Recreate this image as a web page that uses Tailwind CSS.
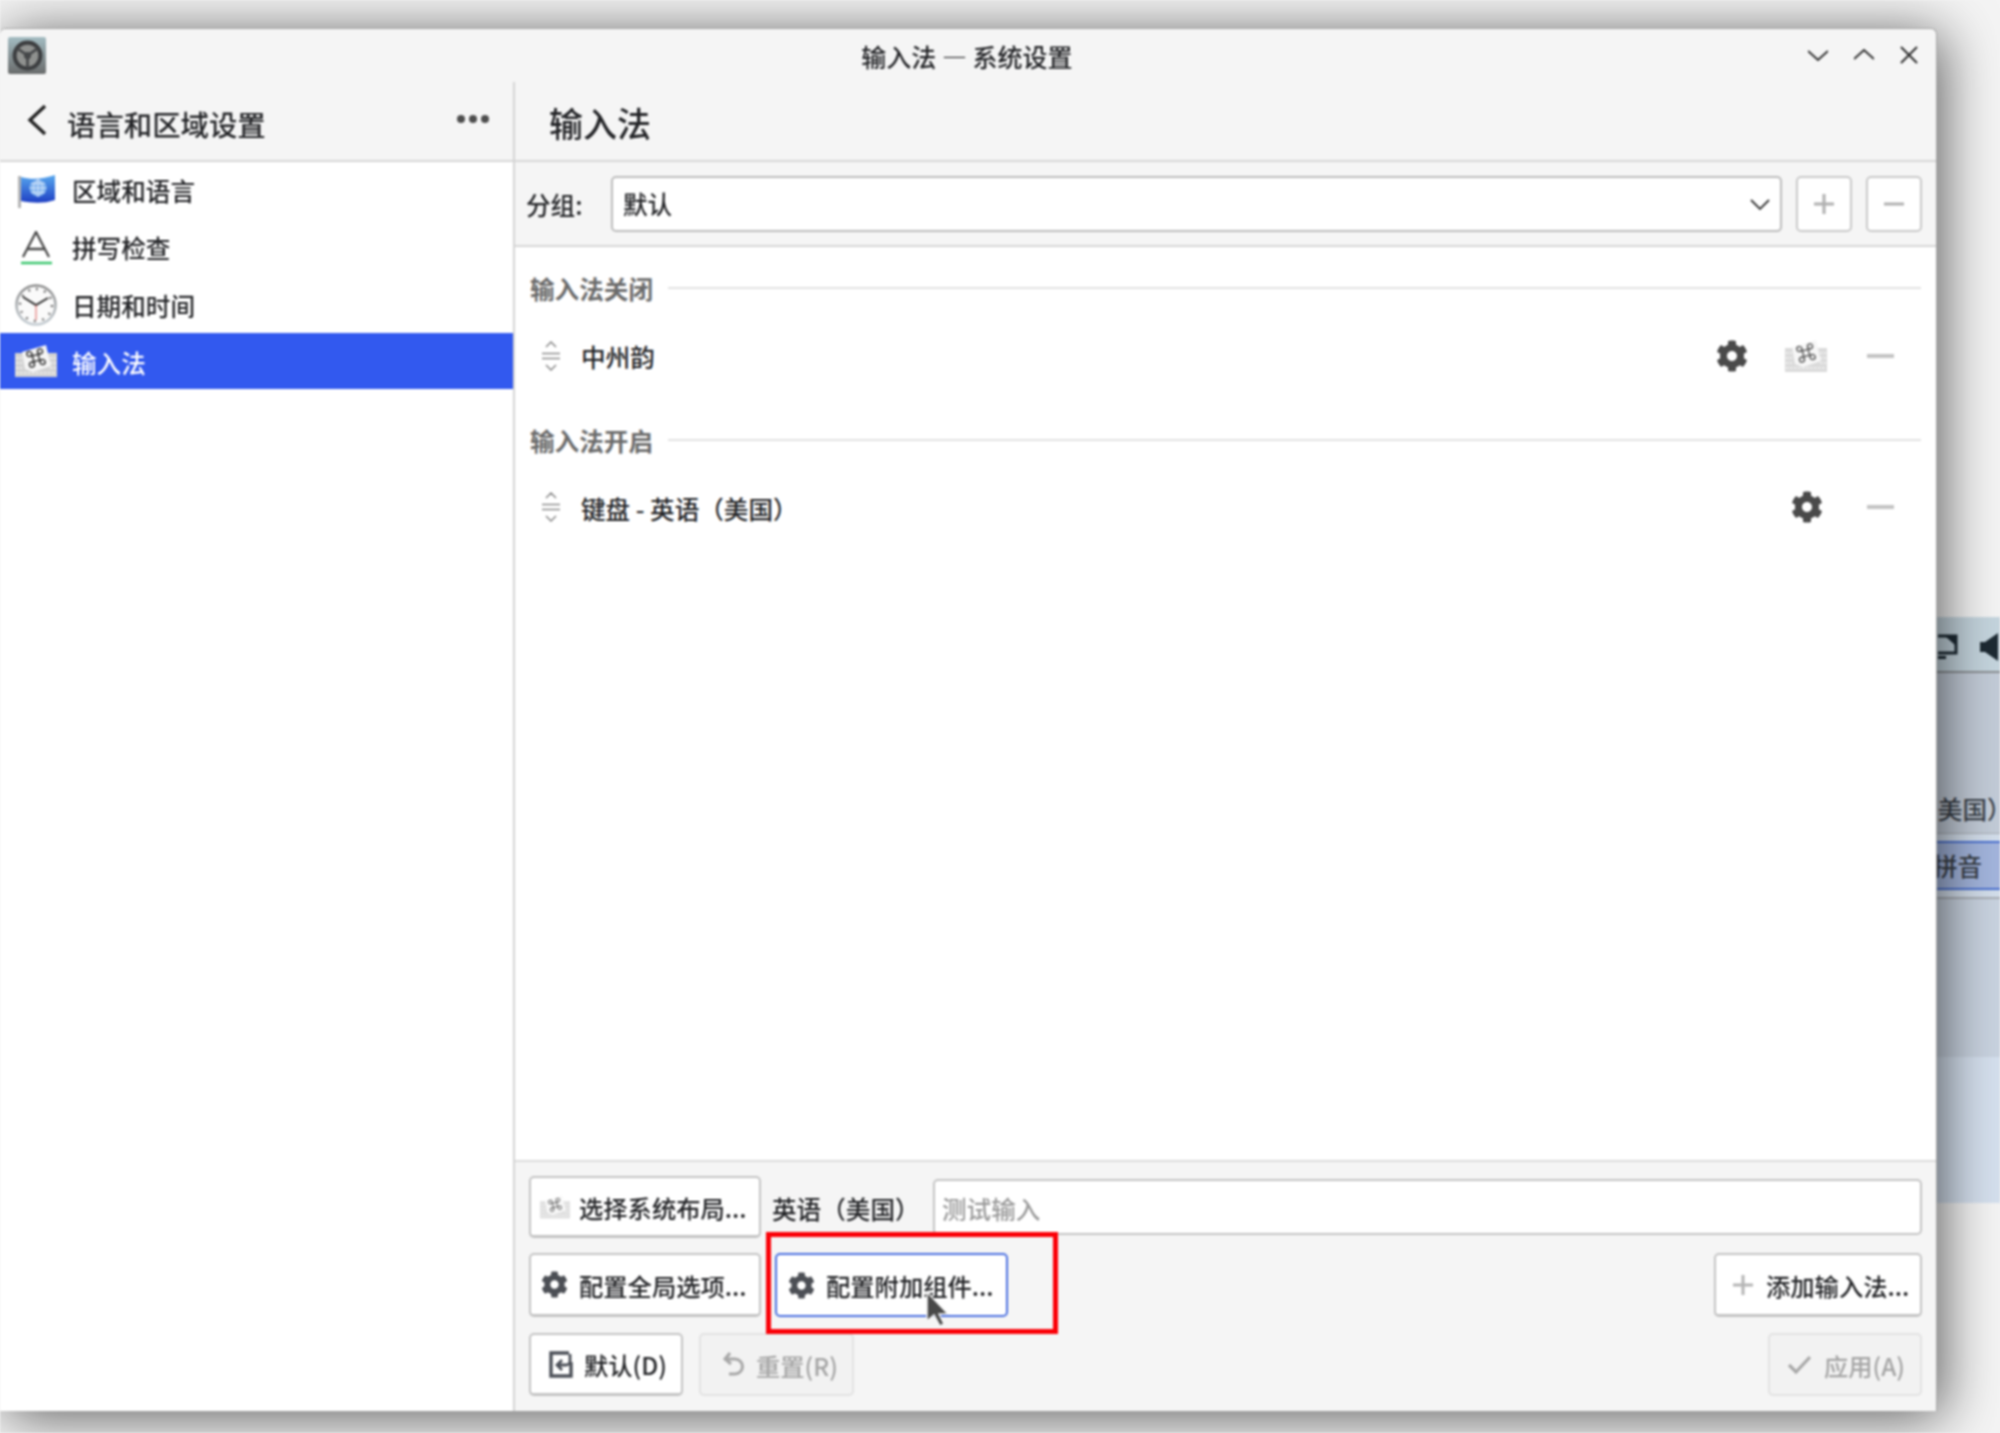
<!DOCTYPE html>
<html lang="zh-CN">
<head>
  <meta charset="UTF-8" />
  <title>输入法 — 系统设置</title>
  <script src="https://cdn.jsdelivr.net/npm/@tailwindcss/browser@4"></script>
</head>
<body class="w-[2000px] h-[1433px] overflow-hidden relative bg-[#f4f4f4] text-[#232427] font-['Noto_Sans_CJK_SC','Noto_Sans',sans-serif] font-medium text-[24.6px] leading-none blur-[0.8px]">
  <svg class="hidden">
    <symbol id="gear" viewBox="0 0 512 512">
      <path fill="currentColor" d="M487.4 315.7l-42.6-24.6c4.3-23.2 4.3-47 0-70.2l42.6-24.6c4.9-2.8 7.1-8.6 5.5-14-11.1-35.6-30-67.8-54.7-94.6-3.8-4.1-10-5.1-14.8-2.3L380.8 110c-17.9-15.4-38.5-27.3-60.8-35.1V25.8c0-5.6-3.9-10.5-9.4-11.7-36.7-8.2-74.3-7.8-109.2 0-5.5 1.2-9.4 6.1-9.4 11.7V75c-22.2 7.9-42.8 19.8-60.8 35.1L88.7 85.5c-4.9-2.8-11-1.9-14.8 2.3-24.7 26.7-43.6 58.9-54.7 94.6-1.7 5.4.6 11.2 5.5 14L67.3 221c-4.3 23.2-4.3 47 0 70.2l-42.6 24.6c-4.9 2.8-7.1 8.6-5.5 14 11.1 35.6 30 67.8 54.7 94.6 3.8 4.1 10 5.1 14.8 2.3l42.6-24.6c17.9 15.4 38.5 27.3 60.8 35.1v49.2c0 5.6 3.9 10.5 9.4 11.7 36.7 8.2 74.3 7.8 109.2 0 5.5-1.2 9.4-6.1 9.4-11.7v-49.2c22.2-7.9 42.8-19.8 60.8-35.1l42.6 24.6c4.9 2.8 11 1.9 14.8-2.3 24.7-26.7 43.6-58.9 54.7-94.6 1.5-5.5-.7-11.3-5.6-14.1zM256 336c-44.1 0-80-35.9-80-80s35.9-80 80-80 80 35.9 80 80-35.9 80-80 80z"/>
    </symbol>
    <symbol id="kbd" viewBox="0 0 42 32">
      <path fill="#d2d2d2" d="M0 8h42v24H0z"/>
      <path fill="none" stroke="#f4f4f4" stroke-width="1.300" stroke-dasharray="2.500 1.500" d="M1 13h6M1 18h6M1 23h6M35 13h6M35 18h6M35 23h6M1 28h40"/>
      <path fill="#f6f6f6" d="M7 7 31 0l5 21-18 6-8-3z"/>
      <g fill="none" stroke="#454545" stroke-width="1.600" transform="rotate(-14 21 13)">
        <circle cx="15.500" cy="7.500" r="2.500"/><circle cx="26.500" cy="7.500" r="2.500"/><circle cx="15.500" cy="18.500" r="2.500"/><circle cx="26.500" cy="18.500" r="2.500"/>
        <path d="M18 7.500V18.500M24 7.500V18.500M15.500 10H26.500M15.500 16H26.500"/>
      </g>
    </symbol>
    <symbol id="handle" viewBox="0 0 20 30">
      <path fill="none" stroke="#8a8a8a" stroke-width="1.500" d="M5 6l5-5 5 5M1 12.500h18M1 17.500h18M5 24l5 5 5-5"/>
    </symbol>
  </svg>

  <!-- window behind -->
  <div class="absolute left-[1850px] top-[617px] w-[150px] h-[586px] flex flex-col overflow-hidden bg-[#d3deeb] text-[#3a4048]">
    <div class="h-[56px] shrink-0 bg-[#c5d5de] border-b-2 border-[#8b8f93] flex items-center pt-[5px] pl-[88px] gap-[22px]">
      <svg class="w-[20px] h-[26px]" viewBox="0 0 20 26"><path fill="none" stroke="#1d2a33" stroke-width="3" d="M0 2h18v17H0"/><path fill="#1d2a33" d="M8 3h9v8zM0 22h8v3H0z"/></svg>
      <svg class="w-[18px] h-[28px]" viewBox="0 0 18 28"><path fill="#1d2a33" d="M0 9h5L18 0v28L5 19H0z"/></svg>
    </div>
    <div class="h-[161px] shrink-0 bg-[#c3ccd8] border-b border-[#a9aeb5] flex items-end pb-[12px] pl-[14px] whitespace-nowrap">
      <span>英语（美国）</span>
    </div>
    <div class="h-[49px] shrink-0 mt-[7px] bg-[#a3b5dd] border-y-2 border-[#4a70d0] flex items-center pl-[83px] whitespace-nowrap">
      <span>拼音</span>
    </div>
    <div class="flex-1 min-h-0 mt-[7px] border-t-2 border-[#a9aeb5] flex flex-col">
      <div class="h-[158px] shrink-0 bg-[#c9d3e0]"></div>
      <div class="flex-1 bg-[#d5e0ee]"></div>
    </div>
  </div>

  <!-- main window -->
  <div class="absolute left-0 top-[28px] w-[1937px] h-[1383px] flex flex-col bg-[#f5f5f5] rounded-t-[6px] border-t border-r border-[#a5a5a5] shadow-[6px_6px_55px_rgba(0,0,0,0.62)]">
    <div class="h-[53px] shrink-0 relative flex items-center justify-center text-[25px]">
      <div class="absolute left-[8px] top-[8px] w-[38px] h-[37px] rounded-[2px] bg-gradient-to-b from-[#a3bcc2] to-[#6a6c6c] flex items-center justify-center">
        <svg class="w-[33px] h-[33px]" viewBox="0 0 32 32"><circle cx="16" cy="16" r="14.500" fill="#3c3e40"/><circle cx="16" cy="16" r="10.500" fill="#8f918f"/><circle cx="16" cy="16" r="3.500" fill="#454749"/><path stroke="#454749" stroke-width="2.600" d="M16 16v12M16 16 6 9M16 16 26 9"/></svg>
      </div>
      <span class="mr-[2px] mt-[2px]">输入法 — 系统设置</span>
      <div class="absolute right-[18px] top-[16px] flex items-center gap-[26px]">
        <svg class="w-[20px] h-[20px]" viewBox="0 0 20 20"><path fill="none" stroke="#2c2c2c" stroke-width="2" d="M0 6l10 9 10-9"/></svg>
        <svg class="w-[20px] h-[20px]" viewBox="0 0 20 20"><path fill="none" stroke="#2c2c2c" stroke-width="2" d="M0 14l10-9 10 9"/></svg>
        <svg class="w-[18px] h-[18px]" viewBox="0 0 18 18"><path fill="none" stroke="#2c2c2c" stroke-width="2" d="M1 1l16 16M17 1 1 17"/></svg>
      </div>
    </div>

    <div class="flex-1 min-h-0 flex">
      <!-- sidebar -->
      <aside class="w-[515px] shrink-0 flex flex-col border-r-2 border-[#d4d4d4]">
        <div class="h-[80px] shrink-0 border-b-2 border-[#d6d6d6] flex items-center pl-[27px] pr-[24px]">
          <svg class="w-[20px] h-[32px] mb-[3px]" viewBox="0 0 20 32"><path fill="none" stroke="#222" stroke-width="3.400" d="M18 2 3 16l15 14"/></svg>
          <span class="ml-[20px] text-[28.400px] mt-[6px]">语言和区域设置</span>
          <div class="ml-auto flex gap-[4px] mb-[4px]">
            <span class="w-[8px] h-[8px] rounded-full bg-[#4d4d4d]"></span>
            <span class="w-[8px] h-[8px] rounded-full bg-[#4d4d4d]"></span>
            <span class="w-[8px] h-[8px] rounded-full bg-[#4d4d4d]"></span>
          </div>
        </div>
        <nav class="flex-1 bg-white">
          <div class="h-[57px] flex items-center pl-[15px]">
            <svg class="w-[42px] h-[34px]" viewBox="0 0 42 34">
              <defs><linearGradient id="flag" x1="0" y1="0" x2="0" y2="1"><stop offset="0" stop-color="#58a8ee"/><stop offset="1" stop-color="#1e3fc4"/></linearGradient></defs>
              <path fill="#b4b4b4" d="M3 2h3v32H3z"/><path fill="url(#flag)" d="M6 3c11 3 22 2 34-2v25c-12 4-23 3-34 1z"/>
              <circle cx="23" cy="14" r="8.500" fill="#7fb2ee"/><path fill="none" stroke="#d6e6fa" stroke-width="1" d="M14.500 14h17M23 5.500v17M16 9.500h14M16 18.500h14M23 5.500c-6 5-6 12 0 17M23 5.500c6 5 6 12 0 17"/>
            </svg>
            <span class="ml-[15px]">区域和语言</span>
          </div>
          <div class="h-[57px] flex items-center pl-[15px]">
            <svg class="w-[42px] h-[34px]" viewBox="0 0 42 34"><path fill="none" stroke="#4a4a4a" stroke-width="2.300" d="M8 26 21 1l13 25M13 18h16"/><path stroke="#35c46a" stroke-width="2.400" d="M6 32h31"/></svg>
            <span class="ml-[15px]">拼写检查</span>
          </div>
          <div class="h-[57px] flex items-center pl-[15px]">
            <svg class="w-[42px] h-[42px]" viewBox="0 0 42 42"><defs><linearGradient id="rim" x1="0" y1="0" x2="0" y2="1"><stop offset="0" stop-color="#8c8c8c"/><stop offset="1" stop-color="#c4ccd2"/></linearGradient></defs><circle cx="21" cy="21" r="19.500" fill="#fafafa" stroke="url(#rim)" stroke-width="2.500"/><path stroke="#666" stroke-width="2.400" stroke-dasharray="1.800 6.580" fill="none" d="M21 5a16 16 0 1 1-.01 0"/><path stroke="#2d2d2d" stroke-width="2" fill="none" d="M8 13l13 8 12-7"/><path stroke="#e0605f" stroke-width="1" d="M21 21v15"/></svg>
            <span class="ml-[15px] mt-[2px]">日期和时间</span>
          </div>
          <div class="h-[56px] flex items-center pl-[15px] bg-[#3259ef] text-white">
            <svg class="w-[42px] h-[32px]"><use href="#kbd"/></svg>
            <span class="ml-[15px] mt-[2px]">输入法</span>
          </div>
        </nav>
      </aside>

      <!-- right pane -->
      <section class="flex-1 min-w-0 flex flex-col">
        <div class="h-[80px] shrink-0 border-b-2 border-[#d6d6d6] flex items-center pl-[34px] pt-[4px] text-[34px]">输入法</div>
        <div class="h-[85px] shrink-0 border-b-2 border-[#d6d6d6] flex items-center pl-[11px] pr-[14px]">
          <span class="w-[85px] shrink-0 whitespace-nowrap mt-[2px]">分组:</span>
          <div class="flex-1 h-[56px] rounded-[5px] bg-white border-2 border-[#bcbcbc] flex items-center pl-[10px] pr-[10px]">
            默认
            <svg class="ml-auto w-[20px] h-[20px]" viewBox="0 0 20 20"><path fill="none" stroke="#333" stroke-width="1.800" d="M1 6l9 9 9-9"/></svg>
          </div>
          <div class="ml-[14px] w-[56px] h-[56px] rounded-[5px] bg-white border-2 border-[#c9c9c9] flex items-center justify-center">
            <svg class="w-[20px] h-[20px]" viewBox="0 0 20 20"><path stroke="#b0b0b0" stroke-width="3" d="M10 0v20M0 10h20"/></svg>
          </div>
          <div class="ml-[14px] w-[56px] h-[56px] rounded-[5px] bg-white border-2 border-[#c9c9c9] flex items-center justify-center">
            <svg class="w-[20px] h-[20px]" viewBox="0 0 20 20"><path stroke="#b0b0b0" stroke-width="3" d="M0 10h20"/></svg>
          </div>
        </div>

        <div class="flex-1 min-h-0 bg-white pl-[15px] pr-[15px] pt-[19px]">
          <div class="h-[44px] flex items-center font-bold text-[#6b6b6b] whitespace-nowrap">
            <span class="w-[138px] shrink-0">输入法关闭</span><span class="flex-1 h-[2px] bg-[#e2e2e2]"></span>
          </div>
          <div class="mt-[24px] h-[44px] flex items-center pl-[11px] pr-[27px]">
            <svg class="w-[20px] h-[30px]"><use href="#handle"/></svg>
            <span class="ml-[20px] mt-[1px]">中州韵</span>
            <svg class="ml-auto w-[32px] h-[32px] text-[#4a4a4a]"><use href="#gear"/></svg>
            <svg class="ml-[37px] w-[42px] h-[32px] opacity-80"><use href="#kbd"/></svg>
            <span class="ml-[40px] w-[27px] h-[4px] bg-[#c4c4c4]"></span>
          </div>
          <div class="mt-[40px] h-[44px] flex items-center font-bold text-[#6b6b6b] whitespace-nowrap">
            <span class="w-[138px] shrink-0">输入法开启</span><span class="flex-1 h-[2px] bg-[#e2e2e2]"></span>
          </div>
          <div class="mt-[23px] h-[44px] flex items-center pl-[11px] pr-[27px]">
            <svg class="w-[20px] h-[30px]"><use href="#handle"/></svg>
            <span class="ml-[20px] mt-[2px]">键盘 - 英语（美国）</span>
            <svg class="ml-auto w-[32px] h-[32px] text-[#4a4a4a]"><use href="#gear"/></svg>
            <span class="ml-[44px] w-[27px] h-[4px] bg-[#c4c4c4]"></span>
          </div>
        </div>

        <div class="h-[251px] shrink-0 border-t-2 border-[#dcdcdc] pl-[14px] pr-[14px] pt-[14px] flex flex-col">
          <div class="h-[62px] flex items-center">
            <div class="w-[232px] h-[62px] shrink-0 rounded-[5px] bg-white border-2 border-[#c4c4c4] border-b-[3px] flex items-center pl-[9px] whitespace-nowrap text-[24.300px]">
              <svg class="w-[30px] h-[24px] opacity-70"><use href="#kbd"/></svg>
              <span class="ml-[9px] mt-[3px]">选择系统布局...</span>
            </div>
            <span class="w-[161px] shrink-0 ml-[11px] whitespace-nowrap mt-[2px]">英语（美国）</span>
            <div class="flex-1 h-[56px] rounded-[5px] bg-white border-2 border-[#c4c4c4] flex items-center pl-[7px] pt-[2px] text-[#9b9b9b]">测试输入</div>
          </div>
          <div class="mt-[15px] h-[64px] flex items-center text-[24.300px]">
            <div class="w-[232px] h-[64px] shrink-0 rounded-[5px] bg-white border-2 border-[#c4c4c4] border-b-[3px] flex items-center pl-[10px] whitespace-nowrap">
              <svg class="w-[27px] h-[27px] text-[#4c4f55]"><use href="#gear"/></svg>
              <span class="ml-[11px] mt-[3px]">配置全局选项...</span>
            </div>
            <div class="ml-[14px] w-[233px] h-[64px] shrink-0 rounded-[5px] bg-white border-2 border-[#4a6fe0] flex items-center pl-[11px] whitespace-nowrap">
              <svg class="w-[27px] h-[27px] text-[#4c4f55]"><use href="#gear"/></svg>
              <span class="ml-[11px] mt-[3px]">配置附加组件...</span>
            </div>
            <div class="ml-auto w-[208px] h-[64px] shrink-0 rounded-[5px] bg-white border-2 border-[#c4c4c4] border-b-[3px] flex items-center pl-[17px] whitespace-nowrap">
              <svg class="w-[20px] h-[20px]" viewBox="0 0 20 20"><path stroke="#b5b5b5" stroke-width="3" d="M10 0v20M0 10h20"/></svg>
              <span class="ml-[13px] mt-[3px]">添加输入法...</span>
            </div>
          </div>
          <div class="mt-[16px] h-[63px] flex items-center text-[24.300px]">
            <div class="w-[154px] h-[63px] shrink-0 rounded-[5px] bg-white border-2 border-[#c4c4c4] border-b-[3px] flex items-center pl-[18px] whitespace-nowrap">
              <svg class="w-[24px] h-[27px]" viewBox="0 0 24 27"><path fill="none" stroke="#4c5058" stroke-width="3.400" d="M20 2H2v23h20V11"/><path fill="none" stroke="#4c5058" stroke-width="2.800" d="M13 9l-5 5 5 5M9 14h8a4 4 0 0 0 4-4V3"/></svg>
              <span class="ml-[11px] mt-[3px]">默认(D)</span>
            </div>
            <div class="ml-[16px] w-[155px] h-[63px] shrink-0 rounded-[5px] bg-[#f2f2f2] border-2 border-[#e2e2e2] flex items-center pl-[22px] whitespace-nowrap text-[#a5a5a5]">
              <svg class="w-[22px] h-[26px]" viewBox="0 0 22 26"><path fill="none" stroke="#a8a8a8" stroke-width="3" d="M7 1 2 7l6 5M3 7h9a7.500 7.500 0 0 1 0 15H6"/></svg>
              <span class="ml-[11px] mt-[3px]">重置(R)</span>
            </div>
            <div class="ml-auto w-[154px] h-[63px] shrink-0 rounded-[5px] bg-[#f2f2f2] border-2 border-[#e2e2e2] flex items-center pl-[18px] whitespace-nowrap text-[#a5a5a5]">
              <svg class="w-[23px] h-[20px]" viewBox="0 0 23 20"><path fill="none" stroke="#a8a8a8" stroke-width="3.200" d="M1 10l7 7L22 2"/></svg>
              <span class="ml-[13px] mt-[3px]">应用(A)</span>
            </div>
          </div>
        </div>
      </section>
    </div>
  </div>

  <!-- annotation and pointer lie over the window -->
  <div class="absolute left-[766px] top-[1232px] w-[292px] h-[102px] border-[5px] border-[#fb0007]"></div>
  <svg class="absolute left-[925px] top-[1290px] w-[26px] h-[38px]" viewBox="0 0 26 38"><path fill="#484848" stroke="#f4f4f4" stroke-width="1.500" d="M2 2v29l7-6 6 11 4-2-5-10h9z"/></svg>
</body>
</html>
